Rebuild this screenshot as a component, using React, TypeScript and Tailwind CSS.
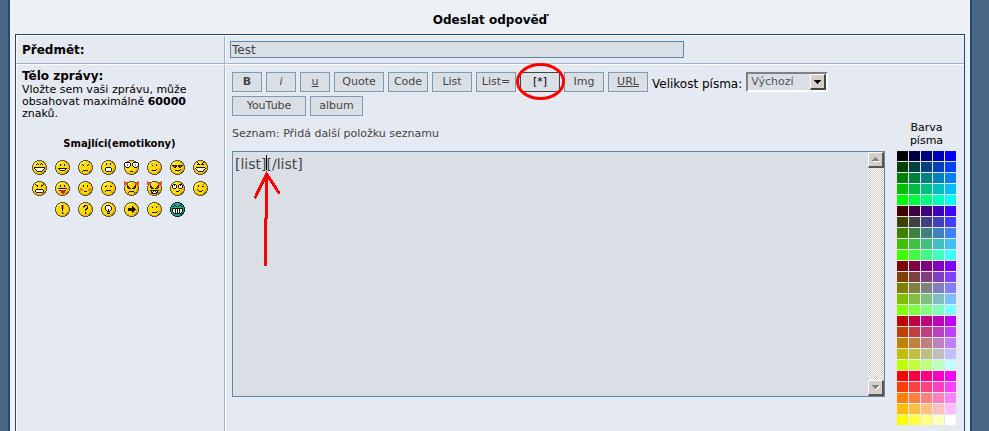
import React from 'react';

interface Smiley {
  name: string;
  black?: string;
  white?: string;
  red?: string;
  shade?: string;
  gray?: string;
  green?: boolean;
  horns?: boolean;
}

// Paths are drawn on a 15x15 pixel grid
const SMILEYS: Smiley[][] = [
  [
    { name: 'Very Happy', black: 'M5 3h1v1h-1zM4 4h1v1h-1zM6 4h1v1h-1zM9 3h1v1h-1zM8 4h1v1h-1zM10 4h1v1h-1zM2 7h11v2h-1v1h-1v1h-1v1h-5v-1h-1v-1h-1v-1h-1z', white: 'M3 8h9v1h-1v1h-1v1h-5v-1h-1v-1h-1z' },
    { name: 'Smile', black: 'M5 4h1v2h-1zM9 4h1v2h-1zM3 8h9v1h-1v1h-1v1h-5v-1h-1v-1h-1z', white: 'M5 9h5v1h-5z' },
    { name: 'Sad', black: 'M5 5h1v1h-1zM9 5h1v1h-1zM4 4h1v1h-1zM10 4h1v1h-1zM5 10h5v1h-5zM4 11h1v1h-1z', shade: 'M3 5h1v1h-1zM11 5h1v1h-1z' },
    { name: 'Surprised', black: 'M5 3h1v2h-1zM9 3h1v2h-1zM5 7h5v1h1v3h-1v1h-5v-1h-1v-3h1z', white: 'M5 8h5v3h-5z' },
    { name: 'Shocked', black: 'M1 2h5v1h-5zM0 3h1v3h-1zM1 6h1v1h3v-1h1v1h-1v1h-3v-1h-1zM6 3h1v3h-1zM9 2h5v1h-5zM8 3h1v3h-1zM14 3h1v3h-1zM9 6h1v1h3v-1h1v1h-1v1h-3v-1h-1zM6 11h3v1h-3z', white: 'M1 3h5v3h-1v1h-3v-1h-1zM9 3h5v3h-1v1h-3v-1h-1z', gray: 'M3 4h1v2h-1zM11 4h1v2h-1z' },
    { name: 'Confused', black: 'M5 5h1v1h-1zM9 4h1v2h-1zM5 10h4v1h-4zM9 9h1v1h-1z', shade: 'M4 3h2v1h-2zM4 10h1v1h-1z' },
    { name: 'Cool', black: 'M2 5h5v1h1v-1h5v1h-1v1h-1v1h-2v-1h-1v-1h-1v1h-1v1h-2v-1h-1v-1h-1zM5 10h5v1h-5zM10 9h1v1h-1z', gray: 'M4 6h1v1h-1zM10 6h1v1h-1z' },
    { name: 'Laughing', black: 'M4 2h1v1h1v1h1v1h-3v-1h1v-1h-1zM10 2h1v1h-1v1h1v1h-3v-1h1v-1h1zM3 7h9v1h1v1h-1v1h-1v1h-1v1h-5v-1h-1v-1h-1v-1h-1v-1h1z', white: 'M3 8h9v1h-1v1h-1v1h-5v-1h-1v-1h-1z' },
  ],
  [
    { name: 'Mad', black: 'M3 3h1v1h2v2h-1v-1h-1v-1h-1zM11 3h1v1h-1v1h-1v1h-1v-2h2zM4 8h7v1h1v2h-1v1h-7v-1h-1v-2h1z', white: 'M4 9h7v2h-7z' },
    { name: 'Razz', black: 'M5 4h1v2h-1zM9 4h1v2h-1zM3 7h9v1h-1v2h-7v-2h-1z', white: 'M4 8h7v1h-7z', red: 'M6 9h4v3h-1v1h-2v-1h-1z' },
    { name: 'Embarassed', black: 'M5 4h1v2h-1zM9 4h1v2h-1zM6 10h3v1h-3z', shade: 'M2 7h2v1h1v2h-3zM11 7h2v3h-3v-2h1z' },
    { name: 'Crying or Very sad', black: 'M4 5h2v1h-2zM9 5h2v1h-2zM5 9h5v1h-5zM4 10h1v1h-1z', shade: 'M5 4h1v1h-1zM9 4h1v1h-1zM10 10h1v1h-1z' },
    { name: 'Evil or Very Mad', horns: true, black: 'M3 4h1v1h1v1h1v1h1v1h-3v-1h-1zM11 4h1v3h-1v1h-3v-1h1v-1h1v-1h1zM5 10h5v1h-5zM4 11h1v1h-1zM10 11h1v1h-1z', red: 'M4 6h2v1h-2zM9 6h2v1h-2z' },
    { name: 'Twisted Evil', horns: true, black: 'M3 4h1v1h1v1h1v1h1v1h-3v-1h-1zM11 4h1v3h-1v1h-3v-1h1v-1h1v-1h1zM3 9h9v1h-1v2h-1v1h-5v-1h-1v-2h-1z', white: 'M5 10h1v1h-1zM7 10h1v1h-1zM9 10h1v1h-1zM6 11h3v1h-3z', red: 'M4 6h2v1h-2zM9 6h2v1h-2z' },
    { name: 'Rolling Eyes', black: 'M3 3h3v1h-3zM2 4h1v3h-1zM6 4h1v3h-1zM3 7h3v1h-3zM9 3h3v1h-3zM8 4h1v3h-1zM12 4h1v3h-1zM9 7h3v1h-3zM6 10h3v1h-3zM9 9h1v1h-1zM4 4h1v1h-1zM10 4h1v1h-1z', white: 'M3 4h1v1h1v-1h1v3h-3zM9 4h1v1h1v-1h1v3h-3z' },
    { name: 'Wink', black: 'M5 4h1v2h-1zM9 5h2v1h-2zM4 8h1v1h1v1h3v1h-3v-1h-1v-1h-1zM9 9h1v1h-1z', shade: 'M9 3h2v1h-2zM4 9h1v1h-1z' },
  ],
  [
    { name: 'Exclamation', black: 'M7 3h1v6h-1zM7 10h1v2h-1z', shade: 'M6 3h1v4h-1zM8 3h1v4h-1zM8 10h1v2h-1z' },
    { name: 'Question', black: 'M6 3h3v1h1v3h-1v1h-1v1h-1v-2h1v-1h1v-2h-2v1h-2v-1h1zM7 10h1v2h-1z', shade: 'M5 5h2v1h-2zM8 10h1v2h-1z' },
    { name: 'Idea', black: 'M5 3h4v1h1v1h1v3h-1v1h-1v3h-3v-3h-1v-1h-1v-4h1z', white: 'M5 4h4v1h1v3h-1v1h-1v-2h-1v2h-1v-1h-1z', gray: 'M6 10h3v1h-3z' },
    { name: 'Arrow', black: 'M4 6h4v-2h1v1h1v1h1v1h1v1h-1v1h-1v1h-1v1h-1v-2h-4z' },
    { name: 'Neutral', black: 'M5 5h1v1h-1zM9 5h1v1h-1zM5 10h5v1h-5zM10 9h1v1h-1z', shade: 'M4 4h2v1h-2zM9 4h2v1h-2z' },
    { name: 'Mr. Green', green: true, black: 'M3 4h1v-1h2v1h1v1h-1v-1h-2v1h-1zM8 4h1v-1h2v1h1v1h-1v-1h-2v1h-1zM2 6h11v4h-1v1h-1v1h-7v-1h-1v-1h-1z', white: 'M3 7h2v4h-1v-1h-1zM6 7h1v4h-1zM8 7h1v4h-1zM10 7h2v3h-1v1h-1z' },
  ],
];

const LEVELS = ['00', '40', '80', 'BF', 'FF'];

const COLORS = LEVELS.flatMap(r => LEVELS.flatMap(g => LEVELS.map(b => `#${r}${g}${b}`)));

const BUTTONS = [
  { label: 'B', className: 'w-[30px] font-bold' },
  { label: 'i', className: 'w-[30px] italic' },
  { label: 'u', className: 'w-[30px] underline' },
  { label: 'Quote', className: 'w-[50px]' },
  { label: 'Code', className: 'w-10' },
  { label: 'List', className: 'w-10' },
  { label: 'List=', className: 'w-10' },
  { label: '[*]', className: 'w-10', active: true },
  { label: 'Img', className: 'w-10' },
  { label: 'URL', className: 'w-10 underline' },
];

const SmileyIcon: React.FC<{ smiley: Smiley }> = ({ smiley }) => (
  <svg width="15" height="15" viewBox="0 0 15 15" shapeRendering="crispEdges" aria-hidden="true">
    <circle cx="7.5" cy="7.5" r="7.5" fill={smiley.green ? '#042f2b' : '#5c564a'} />
    <circle cx="7.5" cy="7.5" r="6.5" fill={smiley.green ? '#16a085' : '#f0b000'} />
    <circle cx="7" cy="7" r="5.8" fill={smiley.green ? '#1fae90' : '#ffdc00'} />
    {!smiley.green && <path d="M4 2h3v1h-2v1h-2v2h-1v-2h1v-1h1z" fill="#fff57a" />}
    {smiley.horns && <path d="M0 0h1v1h2v1h1v2h-2v1h-1v-1h-1zM15 0h-1v1h-2v1h-1v2h2v1h1v-1h1z" fill="#e2502a" />}
    {smiley.shade && <path d={smiley.shade} fill="#d98a00" />}
    {smiley.black && <path d={smiley.black} fill="#1c1400" />}
    {smiley.white && <path d={smiley.white} fill="#ffffff" />}
    {smiley.gray && <path d={smiley.gray} fill="#8a8a8a" />}
    {smiley.red && <path d={smiley.red} fill="#e81800" />}
  </svg>
);

const ToolButton: React.FC<{ label: string; className: string; active?: boolean }> = ({ label, className, active }) => (
  <button
    type="button"
    className={`h-5 border text-[11px] leading-4 bg-[#dadfe6] ${active ? 'border-[#444444] text-black' : 'border-[#8099b3] text-[#444444]'} ${className}`}
  >
    {label}
  </button>
);

const ScrollButton: React.FC<{ label: string; path: string }> = ({ label, path }) => (
  <button
    type="button"
    aria-label={label}
    className="flex h-4 w-4 items-center justify-center border-t border-l border-r-2 border-b-2 border-t-white border-l-white border-r-[#555555] border-b-[#555555] bg-[#d4d0c8]"
  >
    <svg width="9" height="6" viewBox="0 0 9 6" shapeRendering="crispEdges">
      <path d={path} fill="#ffffff" transform="translate(1 1)" />
      <path d={path} fill="#808080" />
    </svg>
  </button>
);

const SmileyPanel: React.FC = () => (
  <div className="mt-4 flex flex-col items-center">
    <h2 className="text-[10px] leading-4 font-bold">Smajlíci(emotikony)</h2>
    <div className="mt-2 flex flex-col items-center gap-1.5">
      {SMILEYS.map((row, index) => (
        <div key={index} className="flex gap-2">
          {row.map(smiley => (
            <button key={smiley.name} type="button" aria-label={smiley.name}>
              <SmileyIcon smiley={smiley} />
            </button>
          ))}
        </div>
      ))}
    </div>
  </div>
);

const Toolbar: React.FC = () => (
  <div className="flex flex-wrap gap-1">
    {BUTTONS.map(({ label, className, active }) =>
      active ? (
        <div key={label} className="relative flex">
          <ToolButton label={label} className={className} active />
          <svg className="pointer-events-none absolute -top-[9px] -left-1 max-w-none" width="50" height="38" viewBox="0 0 50 38">
            <ellipse cx="24.5" cy="18.5" rx="23" ry="17" fill="none" stroke="#ff0000" strokeWidth="3" />
          </svg>
        </div>
      ) : (
        <ToolButton key={label} label={label} className={className} />
      )
    )}
    <div className="flex h-5 items-center gap-1">
      <label htmlFor="font-size" className="pt-1 text-[12px] leading-4">Velikost písma:</label>
      <div className="relative flex">
        <select
          id="font-size"
          className="h-5 w-[82px] appearance-none border-2 border-t-[#808080] border-l-[#808080] border-r-white border-b-white bg-[#dadfe6] pl-[3px] text-[11px] leading-4 text-[#555555]"
        >
          <option>Výchozí</option>
        </select>
        <span className="pointer-events-none absolute top-0.5 right-0.5 flex h-4 w-4 items-center justify-center border-t border-l border-r-2 border-b-2 border-t-white border-l-white border-r-[#444444] border-b-[#444444] bg-[#d4d0c8]">
          <svg width="7" height="4" viewBox="0 0 7 4" shapeRendering="crispEdges">
            <path d="M0 0h7v1h-1v1h-1v1h-1v1h-1v-1h-1v-1h-1v-1h-1z" fill="#000000" />
          </svg>
        </span>
      </div>
    </div>
    <ToolButton label="YouTube" className="w-[74px]" />
    <ToolButton label="album" className="w-[53px]" />
  </div>
);

const MessageBox: React.FC = () => (
  <div className="relative mt-[9px] flex h-[246px] border border-[#5f87ad] bg-[#dadfe6]">
    <textarea
      id="message"
      defaultValue="[list][/list]"
      className="min-w-0 flex-1 resize-none overflow-hidden bg-transparent px-0.5 pt-1 text-[14px] leading-4 text-[#444444] outline-none"
    />
    <div className="flex w-4 flex-col justify-between bg-[repeating-conic-gradient(#d4d0c8_0_25%,#ffffff_0_50%)] bg-size-[2px_2px]">
      <ScrollButton label="Nahoru" path="M4 0h1v1h1v1h1v1h1v1h-7v-1h1v-1h1v-1h1z" />
      <ScrollButton label="Dolů" path="M0 0h8v1h-1v1h-1v1h-1v1h-1v-1h-1v-1h-1v-1h-1z" />
    </div>
    {/* Caret and arrow */}
    <svg className="pointer-events-none absolute top-0 left-0" width="60" height="120" viewBox="0 0 60 120">
      <path d="M33.5 3v15" stroke="#000000" strokeWidth="1" fill="none" />
      <path d="M33.5 22V66L32.5 67V113M22.5 45L33.5 22L46 41" stroke="#ff0000" strokeWidth="3" strokeLinecap="round" fill="none" shapeRendering="crispEdges" />
    </svg>
  </div>
);

const ColorPalette: React.FC = () => (
  <div className="flex flex-col items-center pt-[49px]">
    <p className="w-10 text-center text-[11px] leading-[13px]">Barva písma</p>
    <div className="mt-1 grid grid-cols-5 gap-px">
      {COLORS.map(color => (
        <button key={color} type="button" aria-label={color} className="h-2.5 w-[11px]" style={{ backgroundColor: color }} />
      ))}
    </div>
  </div>
);

const App: React.FC = () => {
  return (
    <div className="min-h-screen bg-[#496684] pr-[17px] pl-2 font-['DejaVu_Sans',Verdana,sans-serif] text-black">
      <main className="flex min-h-screen flex-col border-x-2 border-[#25486b] bg-[#edf1f5] px-[5px]">
        <h1 className="pt-3 pb-1.5 text-center text-[12px] leading-4 font-bold">Odeslat odpověď</h1>
        <form className="flex flex-1 flex-col border-x border-t border-[#25486b] bg-[#e5e9f1]">
          <div className="flex border-t border-b border-t-white border-b-[#a0b4cb]">
            <div className="flex w-[209px] shrink-0 items-center border-r border-l border-r-[#a0b4cb] border-l-white pl-[5px]">
              <label htmlFor="subject" className="text-[12px] leading-4 font-bold">Předmět:</label>
            </div>
            <div className="flex-1 border-l border-white py-[5px] pl-1">
              <input
                id="subject"
                type="text"
                defaultValue="Test"
                className="block h-[17px] w-[454px] border border-[#5f87ad] bg-[#dadfe6] px-px text-[12px] leading-4 text-[#444444] outline-none"
              />
            </div>
          </div>
          <div className="flex flex-1 border-t border-white">
            <div className="w-[209px] shrink-0 border-r border-l border-r-[#a0b4cb] border-l-white pt-1 pr-[7px] pl-[5px]">
              <label htmlFor="message" className="block text-[12px] leading-[15px] font-bold">Tělo zprávy:</label>
              <p className="text-[11px] leading-3">
                Vložte sem vaši zprávu, může obsahovat maximálně <b>60000</b> znaků.
              </p>
              <SmileyPanel />
            </div>
            <div className="flex flex-1 gap-3 border-l border-white pt-[7px] pr-2 pb-1.5 pl-1.5">
              <div className="min-w-0 flex-1">
                <Toolbar />
                <p className="mt-2.5 text-[11px] leading-4 text-[#444444]">Seznam: Přidá další položku seznamu</p>
                <MessageBox />
              </div>
              <ColorPalette />
            </div>
          </div>
        </form>
      </main>
    </div>
  );
};

export default App;
